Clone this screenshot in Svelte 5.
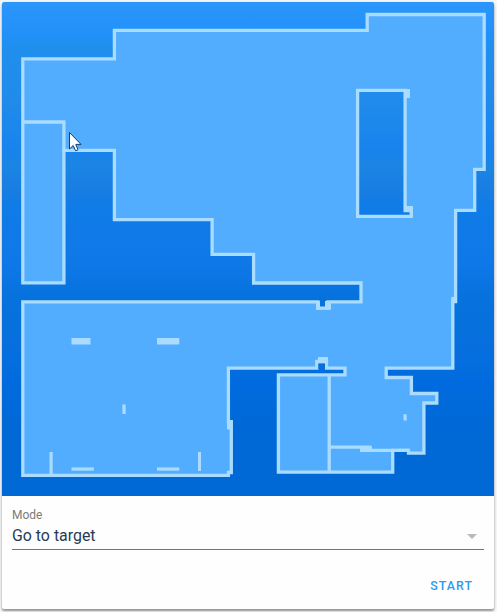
<script>
  const floor =
    'M22.8 58.8H114.4V30.3H367.2V14.5H484.2V169.4H474.7V210.3H455.6V301.5H452.8V368.1H386.2V377.5H411.4V393.5H436.8V403H423.9V453.2H408.5V450.4H392.7V472.2H278.4V374.8H345V368.1H326.5V361.5H317V368.1H228.4V421.7H231.3V472.5H228.4V475.3H22.8V301.9H317.8V308.2H328V301.9H361V283H253.6V254.4H212.1V219.6H114.4V150.3H63.9V282.9H22.8ZM357.6 90.3V216.4H411.2V210.7H405.1V90.3Z';
  const partitions = 'M22.8 122H63.9V151M329.2 376V472.2M329.2 447.1H371M360 450.4H409';
  // Solid obstacle blocks: x, y, width, height
  const obstacles = [
    [404, 89, 6, 9], [404, 206, 9, 6], [411, 206, 2, 11],
    [454, 297, 3, 6], [451.3, 297, 4, 5],
    [316, 301, 4, 9], [325, 301, 6, 8.5], [316, 306.5, 14.5, 3],
    [318, 357, 10, 6.5], [325, 362, 3, 7], [315.4, 360.5, 3, 8],
    [227, 420.5, 5.5, 9], [360, 446, 12, 5.5],
    [71.5, 338, 19, 6.5], [157, 338, 22.3, 6.5],
    [122.4, 404.5, 3.3, 9.5], [49.5, 452, 3.2, 23], [198, 452, 3, 19],
    [71.5, 467.4, 22.3, 3.3], [157, 467.4, 22.3, 3.3], [403.5, 414.2, 3.2, 6.3]
  ];
  let mode = $state('Go to target');
</script>

<article class="card">
  <svg class="map" viewBox="2 2 492 494" width="492" height="494" aria-label="Floor map">
    <defs>
      <linearGradient id="bg" x1="0" y1="0" x2="0" y2="1">
        <stop offset="0" stop-color="#2b96fc" />
        <stop offset=".065" stop-color="#2191f9" />
        <stop offset=".09" stop-color="#208fee" />
        <stop offset=".2" stop-color="#208bea" />
        <stop offset=".3" stop-color="#1883ee" />
        <stop offset=".33" stop-color="#1b85e4" />
        <stop offset=".385" stop-color="#187de2" />
        <stop offset=".41" stop-color="#107ce7" />
        <stop offset=".53" stop-color="#0f78e8" />
        <stop offset=".6" stop-color="#0672dc" />
        <stop offset=".72" stop-color="#066fde" />
        <stop offset=".77" stop-color="#006bdf" />
        <stop offset=".86" stop-color="#0069d6" />
        <stop offset="1" stop-color="#0069d6" />
      </linearGradient>
    </defs>
    <rect x="2" y="2" width="492" height="494" fill="url(#bg)" />
    <path d={floor} fill="#52adff" fill-rule="evenodd" />
    <g fill="none" stroke="#a9dcff" stroke-width="3.3">
      <path d={floor} />
      <path d={partitions} />
    </g>
    <g fill="#a9dcff">
      {#each obstacles as [x, y, width, height]}
        <rect {x} {y} {width} {height} />
      {/each}
    </g>
    <rect x="320" y="300" width="5" height="6.3" fill="#0672dc" />
    <rect x="318.3" y="363.6" width="6.7" height="5.6" fill="#066fde" />
    <path d="M69.5 132.5V149L73.2 145.5L75.6 150.8L78 149.8L75.8 144.4H81Z" fill="#fff" stroke="#16406f" />
  </svg>

  <div class="controls">
    <div class="label">Mode</div>
    <div class="select">
      <span>{mode}</span>
      <i class="arrow"></i>
    </div>
    <div class="actions"><button>START</button></div>
  </div>
</article>

<style>
  :global(body) {
    background: #fafafa;
    font-family: Roboto, 'Liberation Sans', sans-serif;
  }
  :global(#app) {
    height: 612px;
    overflow: hidden;
  }
  .card {
    display: flex;
    flex-direction: column;
    width: 492px;
    height: 607px;
    margin: 2px 0 0 2px;
    overflow: hidden;
    background: #fefefe;
    border-radius: 2px;
    box-shadow: 0 2px 2px rgba(0, 0, 0, 0.32), 0 1px 4px rgba(0, 0, 0, 0.2);
  }
  .map {
    display: block;
    flex: none;
  }
  .controls {
    padding: 9px 10px 0;
  }
  .label {
    height: 20px;
    font-size: 12px;
    line-height: 20px;
    color: #7b7b7b;
  }
  .select {
    display: flex;
    align-items: center;
    justify-content: space-between;
    height: 24px;
    padding-right: 7px;
    border-bottom: 1px solid #747474;
    font-size: 15.9px;
    line-height: 22px;
    color: #263b54;
  }
  .select span {
    padding-bottom: 3px;
  }
  .arrow {
    margin-bottom: 2px;
    border: 5px solid transparent;
    border-top-color: #b8b9bb;
    border-bottom: 0;
  }
  .actions {
    display: flex;
    justify-content: flex-end;
    padding: 26px 11px 0 0;
  }
  button {
    padding: 0;
    border: 0;
    background: none;
    color: #2c9bef;
    font: 500 12.4px/20px Roboto, sans-serif;
    letter-spacing: 1px;
  }
</style>
